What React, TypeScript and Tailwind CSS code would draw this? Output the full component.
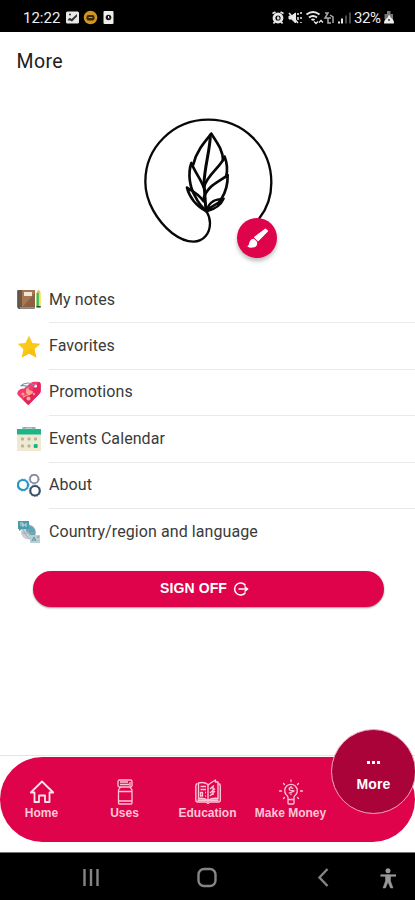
import React from "react";

const LeafLogo = () => (
  <svg viewBox="0 0 480 495" className="h-[165px] w-[160px]" fill="none" stroke="#080808" strokeWidth="8" strokeLinecap="round" strokeLinejoin="round">
    <path d="M388 340C412 309 424 271 424 233C424 127 341 44 235 44C130 44 46 127 46 230C46 290 82 348 126 384C150 402 171 410 190 410C222 410 240 384 240 354C240 340 235 328 229 318" strokeWidth="7" />
    <path d="M244 86C226 108 199 138 190 178M244 86C259 110 279 134 279 166" />
    <path d="M241 90C241 130 224 184 222 235L228 318" strokeWidth="9" />
    <path d="M184 174C195 202 213 223 221 247M184 174C173 206 179 246 195 273C204 292 215 306 230 319" />
    <path d="M171 248C187 257 207 268 221 289M171 248C178 276 199 304 230 319" />
    <path d="M284 155C271 188 233 207 222 246M284 155C292 177 293 198 288 216" />
    <path d="M293 210C273 228 229 241 220 284M293 210C294 244 284 266 274 282" />
    <path d="M281 281C261 283 236 286 230 319M281 281C273 299 252 313 230 319M276 284C260 300 244 303 232 315" strokeWidth="7" />
  </svg>
);

const NotesIcon = () => (
  <svg viewBox="0 0 24 24" className="size-6">
    <rect x="0" y="2" width="3" height="18" rx="1" fill="#66737c" />
    <rect x="1" y="2" width="17" height="19" rx="1" fill="#5b5350" />
    <rect x="2" y="2" width="16" height="17.500" rx=".7" fill="#a47852" />
    <rect x="2" y="2" width="3" height="17.500" fill="#76543f" />
    <path d="M5 19.500L18 5v14.500z" fill="#8d6042" />
    <rect x="7" y="4" width="8" height="4" fill="#eee6d8" />
    <path d="M3 19.500h15v1H3z" fill="#b5b8b9" />
    <path d="M19.500 5l2-3.500 2.200 3.500v15h-4.200z" fill="#ffdc32" />
    <path d="M19.500 5h2.300v14h-2.300z" fill="#29bd74" />
    <path d="M19.500 18h4.200v1.500h-4.200z" fill="#35494b" />
    <path d="M19.500 5l2-3.500L23.500 5z" fill="#e9b56e" />
  </svg>
);
const StarIcon = () => (
  <svg viewBox="0 0 24 24" className="size-6">
    <path d="M12 .8l3.400 7.300 8 .7-6 5.500 2 8.200-7.400-4-7.300 4 1.700-8.200L.7 8.800l7.800-.7z" fill="#fac917" />
    <path d="M12 14l5.400.3 2 8.200-7.400-4-7.300 4 4.500-5.300z" fill="#f6c014" />
  </svg>
);
const TagIcon = () => (
  <svg viewBox="0 0 24 24" className="size-6">
    <path d="M1.500 9.500Q4 7 7 7.500L13.500 2q2-1.500 5-1.300h2.500q2.500 0 2.700 3v6q0 2-1.500 3.300L12 23.500q-.7.700-1.400 0L.8 14q-1.200-2 .7-4.500z" fill="#f53a6e" />
    <path d="M11.300 23.800q.4 0 .7-.3L22.200 13q1.500-1.300 1.500-3.300v-6q0-2-1.500-2.700L6 18.500l4.600 5z" fill="#e3245f" />
    <circle cx="18.500" cy="5" r="1.600" fill="#fff" />
    <path d="M18 5C14 1 8 1 3.500 5c4-1 7 .3 9 2" fill="none" stroke="#8193a3" strokeWidth="1.100" />
    <path d="M9 8l2-1 2 2.500 3 .5-1 2.500-3 2-3-2.500z" fill="#ffa887" />
    <circle cx="6" cy="13" r="1.600" fill="#ffa380" />
    <circle cx="11.500" cy="17.500" r="2" fill="#ffb08c" />
    <circle cx="17" cy="13" r="1.200" fill="#ff8f86" />
    <path d="M6 16l10-4.500" stroke="#ffa09a" strokeWidth="1.200" />
  </svg>
);
const CalendarIcon = () => (
  <svg viewBox="0 0 24 24" className="size-6">
    <path d="M0 6h24v18H0z" fill="#efe9d1" />
    <path d="M0 2h24v5.500H0z" fill="#1bb58a" />
    <path d="M6 2.500V.8h12v1.700M8 0v3M16 0v3" fill="none" stroke="#7ba79a" strokeWidth="1.200" />
    <g fill="#b4b29d">
      <rect x="4" y="10.500" width="3" height="3" rx="1" /><rect x="10.500" y="10.500" width="3" height="3" rx="1" /><rect x="17" y="10.500" width="3" height="3" rx="1" />
      <rect x="4" y="17.500" width="3" height="3" rx="1" /><rect x="10.500" y="17.500" width="3" height="3" rx="1" />
    </g>
    <rect x="16.700" y="17" width="4" height="4" rx="1" fill="#15b989" />
  </svg>
);
const GearsIcon = () => (
  <svg viewBox="0 0 24 24" className="size-6" fill="none">
    <circle cx="6" cy="11" r="5" stroke="#2695ca" strokeWidth="2.200" />
    <circle cx="6" cy="11" r="6" stroke="#2695ca" strokeWidth=".8" strokeDasharray="1.700 1.500" />
    <circle cx="17.200" cy="5" r="4.200" stroke="#8289a0" strokeWidth="1.700" />
    <circle cx="17.200" cy="5" r="5.100" stroke="#8289a0" strokeWidth=".7" strokeDasharray="1.500 1.300" />
    <circle cx="18" cy="16.800" r="4.700" stroke="#344e68" strokeWidth="2" />
    <circle cx="18" cy="16.800" r="5.700" stroke="#344e68" strokeWidth=".7" strokeDasharray="1.500 1.300" />
  </svg>
);
const RegionIcon = () => (
  <svg viewBox="0 0 24 24" className="size-6">
    <circle cx="11.500" cy="12" r="7.500" fill="#c6cfd3" />
    <path d="M10 5c5 0 10 4 8 10l-3 4-2-5-4-3z" fill="#5da5b8" />
    <path d="M6 9q1 6 7 10M12 4q-3 9 4 15M5 13h14" stroke="#9babb3" strokeWidth=".9" fill="none" />
    <path d="M1 1h11v8H5l-3 2V9H1z" fill="#4b9aad" />
    <path d="M3 3h3v4M9 3v4M3 5h6" stroke="#c8dde0" fill="none" />
    <path d="M13 15h10v8H13z" fill="#b9cdd2" />
    <path d="M15 21l2-4 2 4m-3-1h3m1-3h2" stroke="#6197a4" fill="none" />
  </svg>
);

const rows = [
  { label: "My notes", icon: <NotesIcon /> },
  { label: "Favorites", icon: <StarIcon /> },
  { label: "Promotions", icon: <TagIcon /> },
  { label: "Events Calendar", icon: <CalendarIcon /> },
  { label: "About", icon: <GearsIcon /> },
  { label: "Country/region and language", icon: <RegionIcon /> },
];

const StatusBar = () => (
  <div className="flex h-8 items-center bg-black pt-[3px] pl-[23px] text-[#eee]">
    <span className="w-[43px] text-[15px] leading-4">12:22</span>
    <svg viewBox="0 0 52 16" className="h-4 w-[52px]">
      <rect x="0" y="1.500" width="13" height="12" rx="1.500" fill="#e9e9e9" />
      <path d="M1.500 10.500q2-4 4-1.500L11 4v2.500l-5 5-2-1z" fill="#333" />
      <circle cx="4" cy="4.500" r="1" fill="#333" />
      <circle cx="24.500" cy="7.500" r="6.800" fill="#cf9721" />
      <rect x="20.500" y="5" width="8" height="5.500" rx="2" fill="#3a2806" />
      <path d="M22.500 7.500h4" stroke="#cf9721" />
      <rect x="37.500" y="1" width="10" height="13" rx="1" fill="#eee" />
      <circle cx="42.500" cy="7.500" r="2.800" fill="#181818" />
      <path d="M42.500 6v2h1" stroke="#eee" fill="none" />
    </svg>
    <svg viewBox="272 8 80 18" className="ml-[154px] h-[18px] w-20" fill="none" stroke="#e9e9e9">
      <circle cx="278" cy="17" r="4" strokeWidth="2.800" /><path d="M272.500 12.500l3-1.500m5 0l3 1.500M278 15.500v2h1.500M275 20.500l-1.500 2m7.500-2l1.500 2" strokeWidth="1.800" />
      <path d="M289 15h2.500l4-3v10l-4-4H289z" fill="#e9e9e9" strokeWidth="1" /><path d="M289 12l9 10M298 12v2m0 2v3m3-8v2m0 3v2m0 3v1" strokeWidth="1.500" />
      <path d="M306.500 13.500q6.500-5 13 0M309 16.500q4-3 8 0M311.500 19q1.500-1 3 0" strokeWidth="1.900" /><path d="M314 20.500l2 2 2-2m1 1l2-2 2 2" strokeWidth="1.300" />
      <path d="M325 12h3l-3 5h4m1-3l3 2v6m-2-5h-3v5h3" stroke="#aaa" strokeWidth="1.500" />
      <path d="M339 20.500v2m3-5v5" strokeWidth="2" /><path d="M346 14.500v8m4-11v11" stroke="#494949" strokeWidth="2" />
    </svg>
    <span className="ml-[2px] w-[29px] text-[15px] leading-4 tracking-[-0.4px]">32%</span>
    <svg viewBox="0 0 12 16" className="h-4 w-3">
      <path d="M4 1h3.500v3H10v5H1.500V4H4z" fill="#777" /><path d="M1 13.500q0-4.500 3.500-5.500L6 4.500 8 8q3 1 3 5.500z" fill="#eee" /><circle cx="6" cy="10" r="1" fill="#333" />
    </svg>
  </div>
);

const HomeIcon = () => (
  <svg viewBox="0 0 26 26" className="size-[26px]" fill="none" stroke="#ffe3ec" strokeWidth="1.800" strokeLinejoin="round">
    <path d="M1.800 13.500L13 2.500l11.200 11h-3.700V23h-4.500v-6.500h-6V23H5.500v-9.500z" />
  </svg>
);
const JarIcon = () => (
  <svg viewBox="0 0 26 26" className="size-[26px]" fill="none" stroke="currentColor" strokeWidth="1.300">
    <rect x="6" y="1" width="14" height="7" rx="1.500" /><path d="M8 3h8m2 0v4M8 5.500h9" />
    <path d="M8.500 8L6.500 11v13q0 1 1 1H19q1 0 1-1V11l-2-3M6.500 12.500H20M6.500 22H20" />
  </svg>
);
const BookIcon = () => (
  <svg viewBox="0 0 26 26" className="size-[26px]" fill="none" stroke="currentColor" strokeWidth="1.400" strokeLinejoin="round">
    <path d="M2.500 4.500Q.8 5 .8 7v14q0 2 2 2H11l2 1.500 2-1.500h8.500q1.800 0 1.800-2V7q0-2-1.800-2.500" />
    <path d="M3.500 4q5.500-1.500 9.500 1.500v16q-4-3-9.500-2zM13 6q4-3 7.500-5v2h2.500v16.500q-6-1-10 2z" />
    <path d="M5.500 7.500h5.500M5.500 10.500h5.500M5.500 13.500h2v3.500h-2zm4.500 0h1m-1 3.500h1M15 10l4-3.500m-4 7.500l5-4.500m-5 7.500l5-5m-2-5v9" />
    <path d="M2.500 21.200h9.500l1 1 1-1h9.500" strokeWidth="2" />
  </svg>
);
const MoneyIcon = () => (
  <svg viewBox="0 0 26 26" className="size-[26px]" fill="none" stroke="currentColor" strokeWidth="1.300" strokeLinecap="round">
    <path d="M10 20.500v-2q0-1.500-2-3a6.300 6.300 0 1 1 10 0q-2 1.500-2 3v2zM10 20.500V24q0 1 1 1h4q1 0 1-1v-3.500" />
    <path d="M14.800 9.300q-3.600-1.500-3.600.5t3.600 1.900-3.600 2.300M13 7.500V8m0 7v.5M13 1v1.500M5.500 4.500l1 1M20.500 4.500l-1 1M1.500 12h2m19 0h2M5.500 19.500l1-1M20.500 19.500l-1-1" />
  </svg>
);

const navItems = [
  { label: "Home", icon: <HomeIcon /> },
  { label: "Uses", icon: <JarIcon /> },
  { label: "Education", icon: <BookIcon /> },
  { label: "Make Money", icon: <MoneyIcon /> },
];

export default function App() {
  return (
    <div className="flex h-[900px] w-[415px] flex-col overflow-hidden bg-white font-[Roboto,sans-serif]">
      <StatusBar />
      <header className="h-[73px] pt-[17px] pl-[16.5px] text-[19.5px] leading-[26px] tracking-[0.4px] text-[#202020]">More</header>
      <section className="flex h-[172px] justify-center">
        <div className="relative ml-[5px] h-[165px] w-[160px]">
          <LeafLogo />
          <button className="absolute top-[113px] left-[107px] flex size-10 items-center justify-center rounded-full bg-[#de034b] shadow-[0_3px_4px_#bbb]">
            <svg viewBox="0 0 24 24" className="size-[23px]" fill="white">
              <path d="M20.300 2.300l2 2-9.700 9.900-3.500-3.500z" stroke="white" strokeWidth="1.500" strokeLinejoin="round" /><path d="M8.200 12.200l3.300 3.300q1 5.700-4.800 6-3.200.5-5.400-1.500 2-.8 2-3.200 1.200-4.600 4.900-4.600z" />
            </svg>
          </button>
        </div>
      </section>
      <ul>
        {rows.map((r, i) => (
          <li key={r.label} className="flex h-[46.400px] pl-[17px]">
            <div className="flex w-8 items-center">{r.icon}</div>
            <div className={`flex flex-1 items-center border-[#e9e9e9] text-[16px] tracking-[0.08px] text-[#3a3a3a] ${i < 5 ? "border-b" : ""}`}>{r.label}</div>
          </li>
        ))}
      </ul>
      <button className="mt-[16px] ml-[33px] flex h-[36px] w-[351px] shrink-0 items-center justify-center gap-[6px] rounded-full bg-[#de034b] pr-[8px] pb-px font-['Liberation_Sans',sans-serif] text-[14px] font-bold tracking-[0.1px] text-white shadow-[0_1px_2px_#999]">
        <span>SIGN OFF</span>
        <svg viewBox="0 0 16 16" className="size-4" fill="none" stroke="white" strokeWidth="1.500">
          <path d="M12.500 4.500A6 6 0 1 0 12.500 11.500M5.500 8H14m-2.500-2.500L14.500 8 11.500 10.500" />
        </svg>
      </button>
      <div className="flex-1" />
      <nav className="relative h-[97px] border-t border-[#e5e5e5] pt-px">
        <div className="flex h-[85px] rounded-full bg-[#de034b] font-['Liberation_Sans',sans-serif] text-[12px] font-bold text-[#ffc5d7]">
          {navItems.map((n) => (
            <div key={n.label} className="flex w-[83px] shrink-0 flex-col items-center pt-[22px]">
              {n.icon}
              <span className="mt-px leading-[14px] whitespace-nowrap">{n.label}</span>
            </div>
          ))}
        </div>
        <button className="absolute -top-[27px] left-[331px] flex size-[85px] flex-col items-center rounded-full border border-[#f2a6bf] bg-[#a90339] pt-[31px] font-['Liberation_Sans',sans-serif] text-[14px] font-bold text-white">
          <span className="flex h-[4px] gap-[2px]"><i className="size-[3px] bg-white" /><i className="size-[3px] bg-white" /><i className="size-[3px] bg-white" /></span>
          <span className="mt-[11px] leading-[17px] tracking-[0.1px]">More</span>
        </button>
      </nav>
      <footer className="h-[48px] shrink-0 border-t border-[#777] bg-black">
        <svg viewBox="0 853 415 48" className="h-12 w-[415px]" fill="none" stroke="#858585" strokeWidth="2.400">
          <path d="M84.500 869v17M91 869v17M97.500 869v17" />
          <rect x="198.500" y="869" width="17" height="17" rx="5.500" />
          <path d="M327.500 869l-8 8.500 8 8.500" />
          <circle cx="388" cy="870.800" r="2.500" fill="#999" stroke="none" />
          <path d="M380.500 875.500h15.500" stroke="#999" strokeWidth="2.200" /><path d="M385.500 875h5v6l2.500 7h-2.500L388 882l-2.500 6H383l2.500-7z" fill="#999" stroke="#999" strokeWidth=".5" />
        </svg>
      </footer>
    </div>
  );
}
